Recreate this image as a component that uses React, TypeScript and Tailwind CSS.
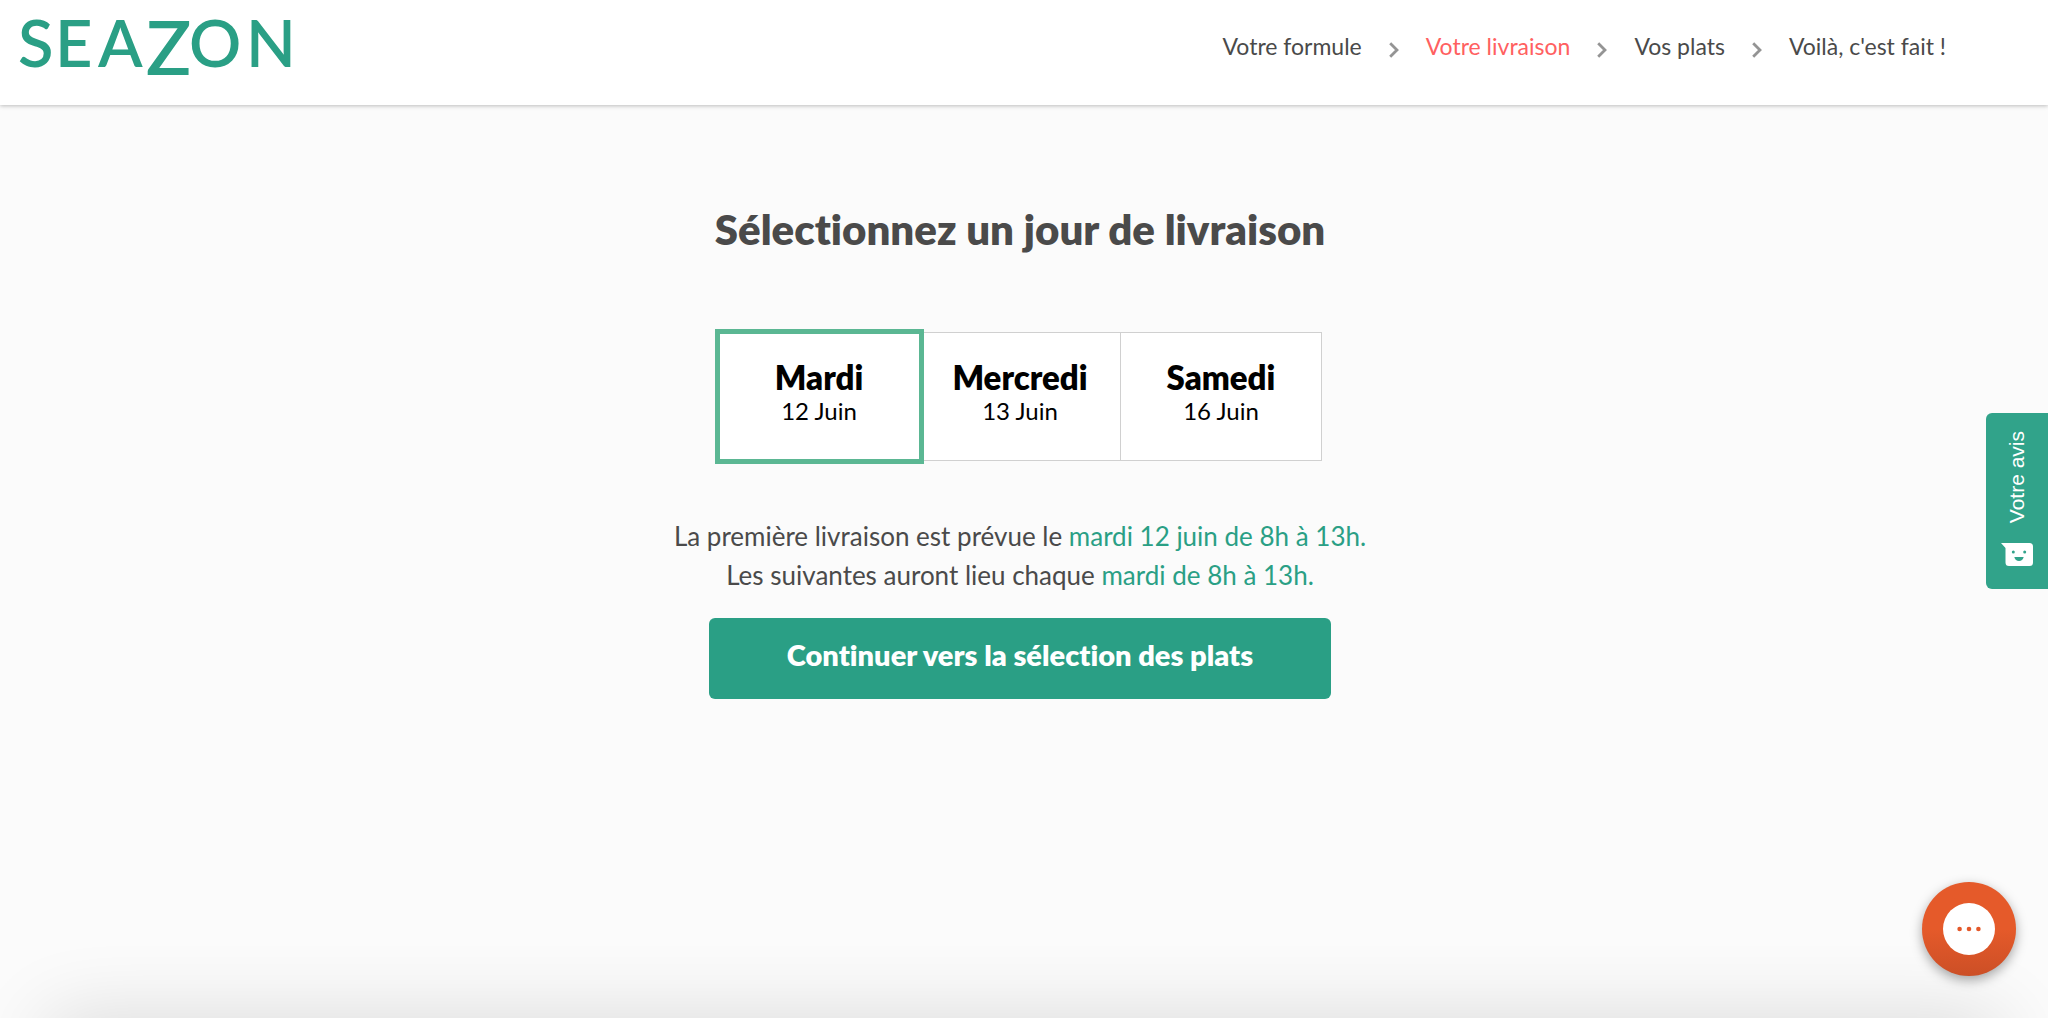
import { Fragment, useState } from "react";
import clsx from "clsx";

type Day = {
  id: string;
  name: string;
  date: string;
};

const days: Day[] = [
  { id: "mardi", name: "Mardi", date: "12 Juin" },
  { id: "mercredi", name: "Mercredi", date: "13 Juin" },
  { id: "samedi", name: "Samedi", date: "16 Juin" },
];

const steps = ["Votre formule", "Votre livraison", "Vos plats", "Voilà, c'est fait !"];

function Logo() {
  return (
    <svg width="290" height="100" viewBox="0 0 290 100" fill="#2a9f85" className="font-['Lato',sans-serif] font-semibold" role="img" aria-label="Seazon">
      <text y="67" fontSize="65" x="0 37 80">SEA</text>
      <text x="128" y="75" fontSize="75">Z</text>
      <text y="67" fontSize="65" x="171 228">ON</text>
    </svg>
  );
}

function Chevron() {
  return (
    <svg width="10" height="16" viewBox="0 0 10 16" fill="none" stroke="#949494" strokeWidth="2.8" className="mt-2" aria-hidden="true">
      <path d="M1.2 1.2 8 8l-6.8 6.8" />
    </svg>
  );
}

function DayButton({ day, selected, onSelect }: { day: Day; selected: boolean; onSelect: () => void }) {
  return (
    <button
      type="button"
      aria-pressed={selected}
      onClick={onSelect}
      className={clsx(
        "flex flex-1 flex-col items-center border-r border-[#d0d0d0] bg-white pt-6 text-black last:border-r-0",
        selected && "relative z-10 outline-[5px] -outline-offset-1 outline-[#5bb793]"
      )}
    >
      <span className="text-[33px] leading-10 font-extrabold">{day.name}</span>
      <span className="text-2xl leading-7">{day.date}</span>
    </button>
  );
}

export default function App() {
  const [selected, setSelected] = useState("mardi");
  const current = days.find((d) => d.id === selected) ?? days[0];
  const weekday = current.name.toLowerCase();

  return (
    <div className="relative flex min-h-screen flex-col overflow-hidden bg-[#fbfbfb] font-['Lato',sans-serif] text-[#4a4a4a] [font-variant-ligatures:none]">
      <header className="flex h-[105px] items-start justify-between bg-white pr-[102px] pl-[18px] shadow-[0_1px_4px_rgba(0,0,0,0.25)]">
        <a href="#">
          <Logo />
        </a>
        <nav className="flex items-center gap-[27px] pt-[30px] text-[23px] leading-8">
          {steps.map((step, i) => (
            <Fragment key={step}>
              {i > 0 && <Chevron />}
              <a href="#" aria-current={i === 1 ? "step" : undefined} className={i === 1 ? "text-[#ff6060]" : undefined}>
                {step}
              </a>
            </Fragment>
          ))}
        </nav>
      </header>

      <main className="flex flex-col items-center pt-24 pr-2">
        <h1 className="text-[42px] leading-[56px] font-extrabold">Sélectionnez un jour de livraison</h1>

        <div className="mt-[75px] flex h-[129px] w-[604px] border border-[#d0d0d0]">
          {days.map((day) => (
            <DayButton key={day.id} day={day} selected={day.id === selected} onSelect={() => setSelected(day.id)} />
          ))}
        </div>

        <p className="mt-14 text-center text-[26px] leading-[39px]">
          La première livraison est prévue le{" "}
          <span className="text-[#2a9f85]">
            {weekday} {current.date.toLowerCase()} de 8h à 13h.
          </span>
          <br />
          Les suivantes auront lieu chaque <span className="text-[#2a9f85]">{weekday} de 8h à 13h.</span>
        </p>

        <button type="button" className="mt-[23px] h-[81px] w-[622px] rounded-md bg-[#2a9f85] pb-2 text-[29px] font-extrabold text-white">
          Continuer vers la sélection des plats
        </button>
      </main>

      {/* Feedback tab */}
      <button
        type="button"
        className="absolute top-[413px] right-0 flex h-[176px] w-[62px] flex-col items-center justify-between rounded-l-md bg-[#31a38a] pt-[18px] pb-[22px] font-['Liberation_Sans',sans-serif] text-[21px] text-white"
      >
        <span className="rotate-180 [writing-mode:vertical-rl]">Votre avis</span>
        <svg width="32" height="24" viewBox="0 0 32 24" aria-hidden="true">
          <path d="M0 0h28.5A3.5 3.5 0 0 1 32 3.5v16a3.5 3.5 0 0 1-3.5 3.5H8a3.5 3.5 0 0 1-3.5-3.5V5Z" fill="#fff" />
          <circle cx="12.3" cy="9" r="1.5" fill="#31a38a" />
          <circle cx="23.7" cy="9" r="1.5" fill="#31a38a" />
          <path d="M13.3 14h9.4q-1 4-4.7 4t-4.7-4Z" fill="#31a38a" />
        </svg>
      </button>

      {/* Shade rising from the lower edge of the window */}
      <div className="pointer-events-none absolute inset-x-12 top-full h-20 shadow-[0_0_80px_rgba(0,0,0,0.14)]" />

      {/* Chat launcher */}
      <button
        type="button"
        aria-label="Ouvrir le chat"
        className="absolute right-8 bottom-[42px] flex size-[94px] items-center justify-center rounded-full bg-[#e45829] bg-linear-to-b from-[#e55a2a] from-50% to-[#cc4f26] shadow-[0_4px_12px_rgba(0,0,0,0.35)]"
      >
        <svg width="52" height="52" viewBox="0 0 52 52" aria-hidden="true">
          <circle cx="26" cy="26" r="26" fill="#fff" />
          <g fill="#e45829">
            <circle cx="16.6" cy="26" r="2.3" />
            <circle cx="26" cy="26" r="2.3" />
            <circle cx="35.4" cy="26" r="2.3" />
          </g>
        </svg>
      </button>
    </div>
  );
}
